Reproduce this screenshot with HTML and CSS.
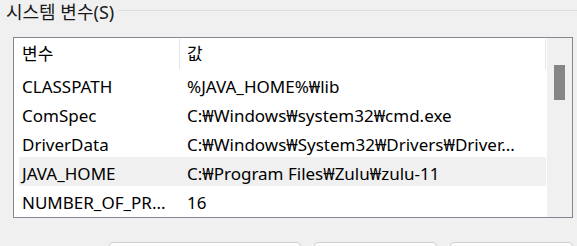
FILE: index.html
```html
<!DOCTYPE html>
<html lang="ko">
<head>
    <meta charset="UTF-8">
    <title>시스템 변수</title>
    <link rel="stylesheet" href="styles.css">
</head>
<body>
    <div class="group-title">
        <span class="title-text">시스템 변수(S)</span>
        <span class="title-line"></span>
    </div>

    <div class="list-box">
        <div class="list-main">
            <div class="row header">
                <div class="cell name">변수</div>
                <div class="cell value">값</div>
            </div>
            <div class="row">
                <div class="cell name">CLASSPATH</div>
                <div class="cell value">%JAVA_HOME%₩lib</div>
            </div>
            <div class="row">
                <div class="cell name">ComSpec</div>
                <div class="cell value">C:₩Windows₩system32₩cmd.exe</div>
            </div>
            <div class="row">
                <div class="cell name">DriverData</div>
                <div class="cell value">C:₩Windows₩System32₩Drivers₩Driver...</div>
            </div>
            <div class="row hover">
                <div class="cell name">JAVA_HOME</div>
                <div class="cell value">C:₩Program Files₩Zulu₩zulu-11</div>
            </div>
            <div class="row">
                <div class="cell name">NUMBER_OF_PR...</div>
                <div class="cell value">16</div>
            </div>
        </div>
        <div class="scrollbar">
            <div class="thumb"></div>
        </div>
    </div>

    <div class="buttons">
        <button class="btn wide"></button>
        <button class="btn"></button>
        <button class="btn"></button>
    </div>
</body>
</html>
```

FILE: styles.css
```css
body {
    margin: 0;
    background-color: #f0f0f0;
    font-family: "Noto Sans", "Noto Sans CJK KR", sans-serif;
    font-size: 17px;
    color: #000;
    overflow: hidden;
}
.group-title {
    display: flex;
    align-items: flex-start;
    height: 26px;
    padding-left: 6px;
}
.title-text {
    font-size: 18px;
    line-height: 24px;
    color: #1a1a1a;
}
.title-line {
    flex: 1;
    height: 1px;
    margin: 10px 0 0 4px;
    background-color: #dcdcdc;
}
.list-box {
    display: flex;
    margin: 11px 0 0 13px;
    width: 558px;
    height: 179px;
    border: 1px solid #828790;
    background-color: #fff;
}
.list-main {
    flex: 1;
    padding-left: 5px;
}
.row {
    display: flex;
    height: 29px;
    align-items: center;
}
.row.header {
    height: 32px;
}
.row.hover {
    background-color: #f0f0f0;
}
.cell {
    white-space: nowrap;
    overflow: hidden;
    padding-top: 3px;
}
.cell.name {
    width: 161px;
    padding-left: 3px;
    box-sizing: border-box;
}
.cell.value {
    flex: 1;
    padding-left: 7px;
}
.header .cell {
    height: 30px;
    line-height: 30px;
    padding-top: 0;
    box-sizing: border-box;
}
.header .cell.name {
    border-right: 1px solid #e5e5e5;
}
.header .cell.value {
    border-right: 1px solid #e5e5e5;
    padding-left: 7px;
}
.scrollbar {
    width: 25px;
    margin-left: 1px;
    background-color: #f0f0f0;
    padding-top: 27px;
}
.thumb {
    width: 11px;
    height: 35px;
    margin-left: 7px;
    background-color: #868686;
}
.buttons {
    display: flex;
    gap: 13px;
    margin: 24px 0 0 109px;
}
.btn {
    width: 123px;
    height: 30px;
    border: 1px solid #d0d0d0;
    border-radius: 4px;
    background-color: #fdfdfd;
}
.btn.wide {
    width: 192px;
}
```
